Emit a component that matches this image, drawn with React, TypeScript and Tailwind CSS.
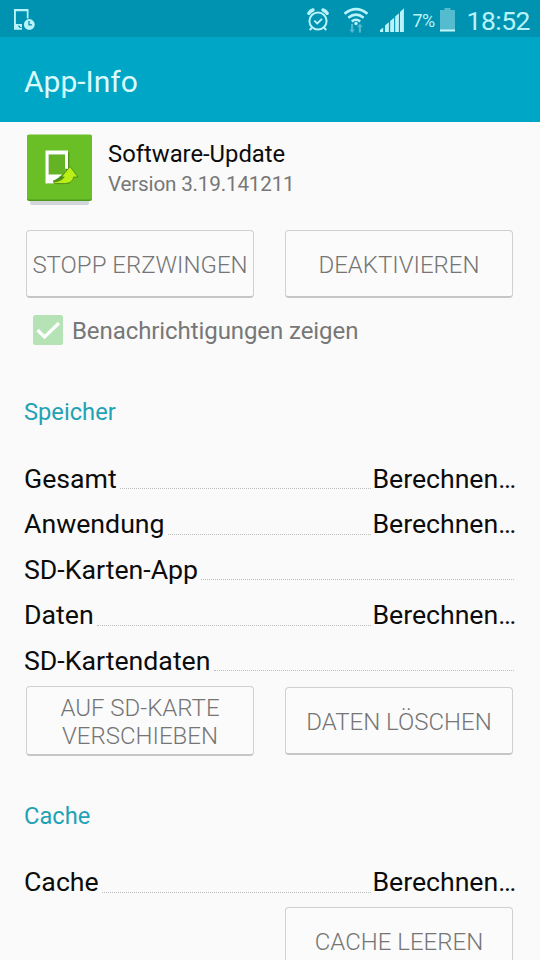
import type { ReactNode } from "react";

function StatusBar() {
  return (
    <div className="flex h-[37px] shrink-0 items-center bg-[#0093b1] pr-[10px] pl-[14px] text-[#b9f3fa]">
      <svg width="22" height="24" viewBox="0 0 22 24" fill="none" className="translate-y-px">
        <path d="M0 1h14.500v9.500h-1.700V3.200H1.900V17H8v4.500H0z" fill="currentColor" />
        <path d="M0 16h8v5.500H0z" fill="currentColor" />
        <path d="M4 18h1.500v1.500H7.500" stroke="#0093b1" strokeWidth="1" />
        <circle cx="15.300" cy="16.500" r="5.400" fill="currentColor" />
        <path d="M15 13v3.800h3" stroke="#0093b1" strokeWidth="1.300" />
      </svg>
      <div className="ml-auto flex items-center">
        <svg width="24" height="26" viewBox="0 0 24 26" fill="none" stroke="currentColor" className="mr-[13px] translate-y-px">
          <circle cx="12" cy="14" r="8.600" strokeWidth="2" />
          <path d="M8.300 13.600l3 2.900 4.700-4.600" strokeWidth="1.900" />
          <path d="M2.800 6.300Q4.300 3.800 7 3" strokeWidth="3.400" strokeLinecap="round" />
          <path d="M21.200 6.300Q19.700 3.800 17 3" strokeWidth="3.400" strokeLinecap="round" />
          <path d="M6 20.500l-2.200 2.700M18 20.500l2.200 2.700" strokeWidth="2" />
        </svg>
        <svg width="26" height="28" viewBox="0 0 26 28" fill="none" stroke="currentColor" className="mr-[11px] translate-y-px">
          <path d="M1.500 7.700Q13-1.500 24.500 7.700" strokeWidth="2.600" />
          <path d="M5.300 11.700Q13 5.500 20.700 11.700" strokeWidth="2.600" />
          <path d="M8.800 15.500Q13 12 17.200 15.500" strokeWidth="2.500" />
          <circle cx="13" cy="17.500" r="1.700" fill="currentColor" stroke="none" />
          <g fill="#4fb9d0" stroke="none">
            <path d="M8 18h2.200v5.500h1.800l-2.900 3.500-2.900-3.500H8z" />
            <path d="M15.800 26.500H18V21h1.800l-2.900-3.500-2.900 3.500h1.800z" />
          </g>
        </svg>
        <svg width="24" height="26" viewBox="0 0 24 26" fill="currentColor" className="mr-[9px] translate-y-px">
          <path d="M0 25v-2l3.200-2.500V25zM5 25v-6.500L8.900 15.300V25zM10.200 25V14l3.900-3.200V25zM15.200 25V9.500l3.700-3.300V25zM20 25V5l3.900-3.800V25z" />
        </svg>
        <span className="mr-[5px] pt-[4px] text-[18px] leading-6 tracking-[-0.7px]">7%</span>
        <svg width="16" height="26" viewBox="0 0 16 26" className="mr-[11px] translate-y-px">
          <path d="M0 3h4.500V1h6v2H15v20H0z" fill="#55bccf" />
          <path d="M0 22.500h15v2H0z" fill="#c4f6fb" />
        </svg>
        <span className="pt-[5px] text-[26.500px] leading-8 tracking-[-0.500px]">18:52</span>
      </div>
    </div>
  );
}

function UpdateIcon() {
  return (
    <svg width="65" height="72" viewBox="0 0 65 72" fill="none">
      <rect x="3" y="60" width="59" height="11" rx="2" fill="#d2d5d9" />
      <rect x="0" y="1" width="65" height="66" rx="2" fill="#4f9a1c" />
      <rect x="0" y="0.500" width="65" height="65" rx="2" fill="#6abf26" />
      <path
        d="M19 17.500h22.500V49H19zM22.200 21v20h16V21z"
        fill="#4d9219"
        fillRule="evenodd"
        transform="translate(.8 .8)"
      />
      <path d="M22 20.500h16v20H22z" fill="#64b324" />
      <path d="M18.500 16.500H41V35l-3-.5V20.500H21.700V40.500H35L31 44q-3 2-5 2.500l1.500 3h-9z" fill="#fff" />
      <path
        d="M43 32.500l8 10.500h-4.300q-1 6-8.500 6.600H28.500q-2-.3-2-1.800 7 0 10.800-4.800h-2.800z"
        fill="#b9ee16"
        stroke="#47861b"
        strokeWidth="0.8"
      />
    </svg>
  );
}

function Button({ className, children }: { className: string; children: ReactNode }) {
  return (
    <button
      className={
        "flex w-[228px] items-center justify-center rounded-[4px] border border-b-2 border-[#d0d0d0] border-b-[#c6c6c6] bg-[#fbfbfb] pt-[4px] text-center text-[24px] leading-[28.500px] font-light text-[#757575] " +
        className
      }
    >
      {children}
    </button>
  );
}

function Row({ label, value }: { label: string; value?: string }) {
  return (
    <div className="flex h-[45.500px] items-center text-[26.700px] leading-[32px] text-[#0c0c0c]">
      <span>{label}</span>
      <span className="mr-[2px] ml-[3px] h-px flex-1 translate-y-[10px] border-t border-dotted border-[#bdbdbd]" />
      {value && <span className="tracking-[-0.040px]">{value}</span>}
    </div>
  );
}

export default function App() {
  return (
    <div className="flex h-[960px] w-[540px] flex-col overflow-hidden bg-[#fafafa] font-[Roboto,sans-serif]">
      <StatusBar />
      <header className="flex h-[84.500px] shrink-0 items-center bg-[#00a6c5] pt-[4px] pl-[24px] text-[30px] text-[#d9fbfd]">
        App-Info
      </header>
      <main className="flex flex-col pr-[24px] pl-[24px]">
        <section className="flex pt-[12.500px] pl-[3px]">
          <UpdateIcon />
          <div className="ml-[16px] flex flex-col pt-[4px]">
            <h1 className="text-[23.800px] leading-[32px] text-[#0c0c0c]">Software-Update</h1>
            <p className="text-[20.700px] leading-[29px] tracking-[-0.200px] text-[#777]">Version 3.19.141211</p>
          </div>
        </section>
        <div className="mt-[24px] flex justify-between pr-[3px] pl-[2px]">
          <Button className="h-[68px]">STOPP ERZWINGEN</Button>
          <Button className="h-[68px]">DEAKTIVIEREN</Button>
        </div>
        <label className="mt-[16px] flex h-[32px] items-center pl-[9px] text-[24px] tracking-[-0.080px] text-[#777]">
          <svg width="30" height="30" viewBox="0 0 30 30" fill="none" className="mr-[9px]">
            <rect width="30" height="30" rx="2.500" fill="#b5e3b5" />
            <path d="M4.500 15l7 7L26 8" stroke="#fff" strokeWidth="3.200" />
          </svg>
          <span className="pt-px">Benachrichtigungen zeigen</span>
        </label>
        <h2 className="mt-[50px] h-[32px] text-[23.700px] leading-[32px] text-[#1fa2b5]">Speicher</h2>
        <div className="mt-[28px]">
          <Row label="Gesamt" value="Berechnen…" />
          <Row label="Anwendung" value="Berechnen…" />
          <Row label="SD-Karten-App" />
          <Row label="Daten" value="Berechnen…" />
          <Row label="SD-Kartendaten" />
        </div>
        <div className="mt-[2px] flex items-center justify-between pr-[3px] pl-[2px]">
          <Button className="h-[70px]">
            AUF SD-KARTE
            <br />
            VERSCHIEBEN
          </Button>
          <Button className="h-[68px]">DATEN LÖSCHEN</Button>
        </div>
        <h2 className="mt-[44px] h-[32px] text-[23.700px] leading-[32px] text-[#1fa2b5]">Cache</h2>
        <div className="mt-[28px]">
          <Row label="Cache" value="Berechnen…" />
        </div>
        <div className="mt-[2px] flex justify-end pr-[3px]">
          <Button className="h-[68px]">CACHE LEEREN</Button>
        </div>
      </main>
    </div>
  );
}
